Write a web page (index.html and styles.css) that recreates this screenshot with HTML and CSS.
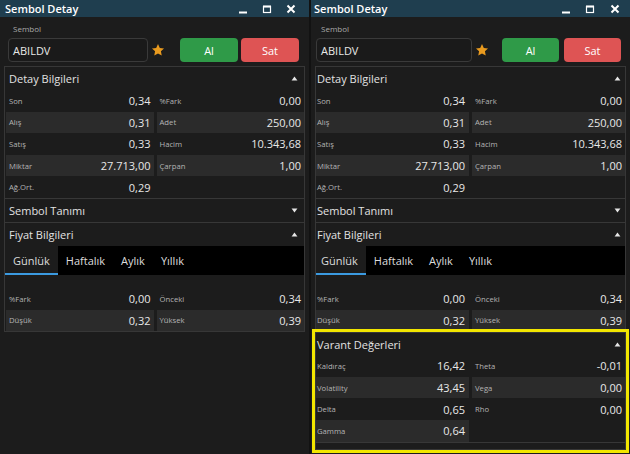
FILE: index.html
```html
<!DOCTYPE html>
<html lang="tr">
<head>
<meta charset="utf-8">
<title>Sembol Detay</title>
<link rel="stylesheet" href="styles.css">
</head>
<body>
<div class="desk">
  <!-- LEFT WINDOW -->
  <div class="win win-left">
    <div class="titlebar">
      <span class="title">Sembol Detay</span>
      <div class="ctrls">
        <span class="ctrl"><svg width="10" height="10" viewBox="0 0 10 10"><rect x="1" y="7.5" width="8" height="2" fill="#fff"/></svg></span>
        <span class="ctrl"><svg width="10" height="10" viewBox="0 0 10 10"><rect x="1.5" y="2.5" width="7" height="6" fill="none" stroke="#fff" stroke-width="1.2"/><rect x="1" y="1.5" width="8" height="2" fill="#fff"/></svg></span>
        <span class="ctrl"><svg width="10" height="10" viewBox="0 0 10 10"><path d="M1.5 1.5 L8.5 8.5 M8.5 1.5 L1.5 8.5" stroke="#fff" stroke-width="2" fill="none"/></svg></span>
      </div>
    </div>
    <div class="toolbar">
      <div class="tool-label">Sembol</div>
      <div class="tool-row">
        <div class="input">ABILDV</div>
        <svg class="star" viewBox="0 0 24 24"><path d="M12 1.8l3.1 6.6 7.2.9-5.3 5 1.4 7.1L12 17.9l-6.4 3.5 1.4-7.1-5.3-5 7.2-.9z" fill="#e89a1f"/></svg>
        <div class="btns">
          <span class="btn btn-buy">Al</span>
          <span class="btn btn-sell">Sat</span>
        </div>
      </div>
    </div>
    <div class="panel">
      <div class="sec">
        <div class="sec-head"><span>Detay Bilgileri</span><svg class="tri" viewBox="0 0 8 6"><path d="M4 0.5 L7.5 5.5 L0.5 5.5 Z" fill="#e6e6e6"/></svg></div>
        <div class="grid">
          <div class="col">
            <div class="cell"><span class="lbl">Son</span><span class="val">0,34</span></div>
            <div class="cell"><span class="lbl">Alış</span><span class="val">0,31</span></div>
            <div class="cell"><span class="lbl">Satış</span><span class="val">0,33</span></div>
            <div class="cell"><span class="lbl">Miktar</span><span class="val">27.713,00</span></div>
            <div class="cell"><span class="lbl">Ağ.Ort.</span><span class="val">0,29</span></div>
          </div>
          <div class="col">
            <div class="cell"><span class="lbl">%Fark</span><span class="val">0,00</span></div>
            <div class="cell"><span class="lbl">Adet</span><span class="val">250,00</span></div>
            <div class="cell"><span class="lbl">Hacim</span><span class="val">10.343,68</span></div>
            <div class="cell"><span class="lbl">Çarpan</span><span class="val">1,00</span></div>
          </div>
        </div>
      </div>
      <div class="sec">
        <div class="sec-head"><span>Sembol Tanımı</span><svg class="tri" viewBox="0 0 8 6"><path d="M0.5 0.5 L7.5 0.5 L4 5.5 Z" fill="#e6e6e6"/></svg></div>
      </div>
      <div class="sec">
        <div class="sec-head"><span>Fiyat Bilgileri</span><svg class="tri" viewBox="0 0 8 6"><path d="M4 0.5 L7.5 5.5 L0.5 5.5 Z" fill="#e6e6e6"/></svg></div>
        <div class="tabs">
          <span class="tab active">Günlük</span>
          <span class="tab">Haftalık</span>
          <span class="tab">Aylık</span>
          <span class="tab">Yıllık</span>
        </div>
        <div class="grid grid-price">
          <div class="col">
            <div class="cell"><span class="lbl">%Fark</span><span class="val">0,00</span></div>
            <div class="cell"><span class="lbl">Düşük</span><span class="val">0,32</span></div>
          </div>
          <div class="col">
            <div class="cell"><span class="lbl">Önceki</span><span class="val">0,34</span></div>
            <div class="cell"><span class="lbl">Yüksek</span><span class="val">0,39</span></div>
          </div>
        </div>
      </div>
    </div>
  </div>

  <!-- RIGHT WINDOW -->
  <div class="win win-right">
    <div class="titlebar">
      <span class="title">Sembol Detay</span>
      <div class="ctrls">
        <span class="ctrl"><svg width="10" height="10" viewBox="0 0 10 10"><rect x="1" y="7.5" width="8" height="2" fill="#fff"/></svg></span>
        <span class="ctrl"><svg width="10" height="10" viewBox="0 0 10 10"><rect x="1.5" y="2.5" width="7" height="6" fill="none" stroke="#fff" stroke-width="1.2"/><rect x="1" y="1.5" width="8" height="2" fill="#fff"/></svg></span>
        <span class="ctrl"><svg width="10" height="10" viewBox="0 0 10 10"><path d="M1.5 1.5 L8.5 8.5 M8.5 1.5 L1.5 8.5" stroke="#fff" stroke-width="2" fill="none"/></svg></span>
      </div>
    </div>
    <div class="toolbar">
      <div class="tool-label">Sembol</div>
      <div class="tool-row">
        <div class="input">ABILDV</div>
        <svg class="star" viewBox="0 0 24 24"><path d="M12 1.8l3.1 6.6 7.2.9-5.3 5 1.4 7.1L12 17.9l-6.4 3.5 1.4-7.1-5.3-5 7.2-.9z" fill="#e89a1f"/></svg>
        <div class="btns">
          <span class="btn btn-buy">Al</span>
          <span class="btn btn-sell">Sat</span>
        </div>
      </div>
    </div>
    <div class="panel">
      <div class="sec">
        <div class="sec-head"><span>Detay Bilgileri</span><svg class="tri" viewBox="0 0 8 6"><path d="M4 0.5 L7.5 5.5 L0.5 5.5 Z" fill="#e6e6e6"/></svg></div>
        <div class="grid">
          <div class="col">
            <div class="cell"><span class="lbl">Son</span><span class="val">0,34</span></div>
            <div class="cell"><span class="lbl">Alış</span><span class="val">0,31</span></div>
            <div class="cell"><span class="lbl">Satış</span><span class="val">0,33</span></div>
            <div class="cell"><span class="lbl">Miktar</span><span class="val">27.713,00</span></div>
            <div class="cell"><span class="lbl">Ağ.Ort.</span><span class="val">0,29</span></div>
          </div>
          <div class="col">
            <div class="cell"><span class="lbl">%Fark</span><span class="val">0,00</span></div>
            <div class="cell"><span class="lbl">Adet</span><span class="val">250,00</span></div>
            <div class="cell"><span class="lbl">Hacim</span><span class="val">10.343,68</span></div>
            <div class="cell"><span class="lbl">Çarpan</span><span class="val">1,00</span></div>
          </div>
        </div>
      </div>
      <div class="sec">
        <div class="sec-head"><span>Sembol Tanımı</span><svg class="tri" viewBox="0 0 8 6"><path d="M0.5 0.5 L7.5 0.5 L4 5.5 Z" fill="#e6e6e6"/></svg></div>
      </div>
      <div class="sec">
        <div class="sec-head"><span>Fiyat Bilgileri</span><svg class="tri" viewBox="0 0 8 6"><path d="M4 0.5 L7.5 5.5 L0.5 5.5 Z" fill="#e6e6e6"/></svg></div>
        <div class="tabs">
          <span class="tab active">Günlük</span>
          <span class="tab">Haftalık</span>
          <span class="tab">Aylık</span>
          <span class="tab">Yıllık</span>
        </div>
        <div class="grid grid-price">
          <div class="col">
            <div class="cell"><span class="lbl">%Fark</span><span class="val">0,00</span></div>
            <div class="cell"><span class="lbl">Düşük</span><span class="val">0,32</span></div>
          </div>
          <div class="col">
            <div class="cell"><span class="lbl">Önceki</span><span class="val">0,34</span></div>
            <div class="cell"><span class="lbl">Yüksek</span><span class="val">0,39</span></div>
          </div>
        </div>
      </div>
    </div>
    <div class="panel panel-varant">
      <div class="sec">
        <div class="sec-head sec-head-v"><span>Varant Değerleri</span><svg class="tri" viewBox="0 0 8 6"><path d="M4 0.5 L7.5 5.5 L0.5 5.5 Z" fill="#e6e6e6"/></svg></div>
        <div class="grid grid-varant">
          <div class="col">
            <div class="cell"><span class="lbl">Kaldıraç</span><span class="val">16,42</span></div>
            <div class="cell"><span class="lbl">Volatility</span><span class="val">43,45</span></div>
            <div class="cell"><span class="lbl">Delta</span><span class="val">0,65</span></div>
            <div class="cell"><span class="lbl">Gamma</span><span class="val">0,64</span></div>
          </div>
          <div class="col">
            <div class="cell"><span class="lbl">Theta</span><span class="val">-0,01</span></div>
            <div class="cell"><span class="lbl">Vega</span><span class="val">0,00</span></div>
            <div class="cell"><span class="lbl">Rho</span><span class="val">0,00</span></div>
          </div>
        </div>
        <div class="varant-foot"></div>
      </div>
    </div>
  </div>
</div>
</body>
</html>
```

FILE: styles.css
```css
* { box-sizing: border-box; }

body {
  margin: 0;
  width: 630px;
  height: 454px;
  overflow: hidden;
  background: #121212;
  font-family: "Open Sans", "DejaVu Sans", sans-serif;
}

.desk {
  display: flex;
  gap: 2px;
  height: 454px;
}

.win {
  background: #1c1c1c;
  display: flex;
  flex-direction: column;
  height: 100%;
}

.win-left { width: 309px; }
.win-right { width: 319px; }

.titlebar {
  height: 17px;
  background: #1f3e4f;
  display: flex;
  align-items: center;
  padding-left: 5px;
}

.win-left .titlebar { padding-right: 6px; }
.win-right .titlebar { padding-left: 3px; padding-right: 3px; }

.title {
  flex: 1;
  color: #ffffff;
  font-size: 11px;
  font-weight: 600;
  line-height: 17px;
}

.ctrls {
  display: flex;
}

.ctrl {
  width: 24px;
  height: 17px;
  display: flex;
  align-items: center;
  justify-content: center;
}

.win-right .ctrl { width: 24.5px; }

.toolbar {
  padding: 7px 10px 0 8px;
}

.win-right .toolbar { padding-left: 5px; padding-right: 9px; }

.tool-label {
  font-size: 8px;
  line-height: 10px;
  height: 10px;
  color: #aaaaaa;
  padding-left: 5px;
  margin-bottom: 4px;
}

.tool-row {
  display: flex;
  align-items: center;
  height: 24px;
}

.input {
  width: 140px;
  height: 24px;
  border: 1px solid #3a3a3a;
  border-radius: 4px;
  background: #1a1a1a;
  color: #e8e8e8;
  font-size: 11px;
  padding-left: 4px;
  display: flex;
  align-items: center;
}

.win-right .input { width: 156px; }

.star {
  width: 14px;
  height: 14px;
  margin-left: 3px;
}

.btns {
  margin-left: auto;
  display: flex;
  gap: 3px;
}

.win-right .btns { gap: 5px; }

.btn {
  width: 58px;
  height: 24px;
  border-radius: 4px;
  color: #ffffff;
  font-size: 11px;
  display: flex;
  align-items: center;
  justify-content: center;
}

.win-right .btn { width: 57px; }

.btn-buy { background: #2f9a48; }
.btn-sell { background: #de5454; }

.panel {
  margin: 4px 4px 0;
  border: 1px solid #373737;
}

.sec + .sec { border-top: 1px solid #373737; }

.sec-head {
  height: 23px;
  display: flex;
  align-items: center;
  justify-content: space-between;
  padding: 0 6px 0 4px;
  color: #e2e2e2;
  font-size: 11px;
}

.win-right .sec-head { padding-left: 1px; padding-right: 4px; }

.sec-head-v { height: 22px; }

.tri {
  width: 7px;
  height: 5px;
}

.grid {
  display: flex;
  gap: 3px;
  padding-left: 1px;
}

.win-right .grid { padding-left: 0; }

.col {
  flex: 1;
  display: flex;
  flex-direction: column;
}

.cell {
  height: 21.6px;
  display: flex;
  align-items: center;
  justify-content: space-between;
  padding: 0 3px;
}

.win-right .col:first-child .cell { padding-left: 1px; padding-right: 4px; }

.cell:nth-child(even) { background: #2b2b2b; }

.lbl {
  font-size: 7.7px;
  color: #b4b4b4;
}

.val {
  font-size: 11px;
  color: #e8e8e8;
}

.tabs {
  height: 29px;
  background: #000000;
  display: flex;
}

.tab {
  padding: 0 8px;
  display: flex;
  align-items: center;
  color: #dddddd;
  font-size: 11px;
}

.win-right .tab:first-child { padding-left: 5px; }

.tab.active {
  background: #1c1c1c;
  box-shadow: inset 0 -2px 0 #3b9ae0;
}

.grid-price { padding-top: 13px; }

.panel-varant {
  margin-top: 0;
  outline: 3px solid #f2e600;
}

.varant-foot {
  height: 7px;
  border-top: 1px solid #373737;
}
```
